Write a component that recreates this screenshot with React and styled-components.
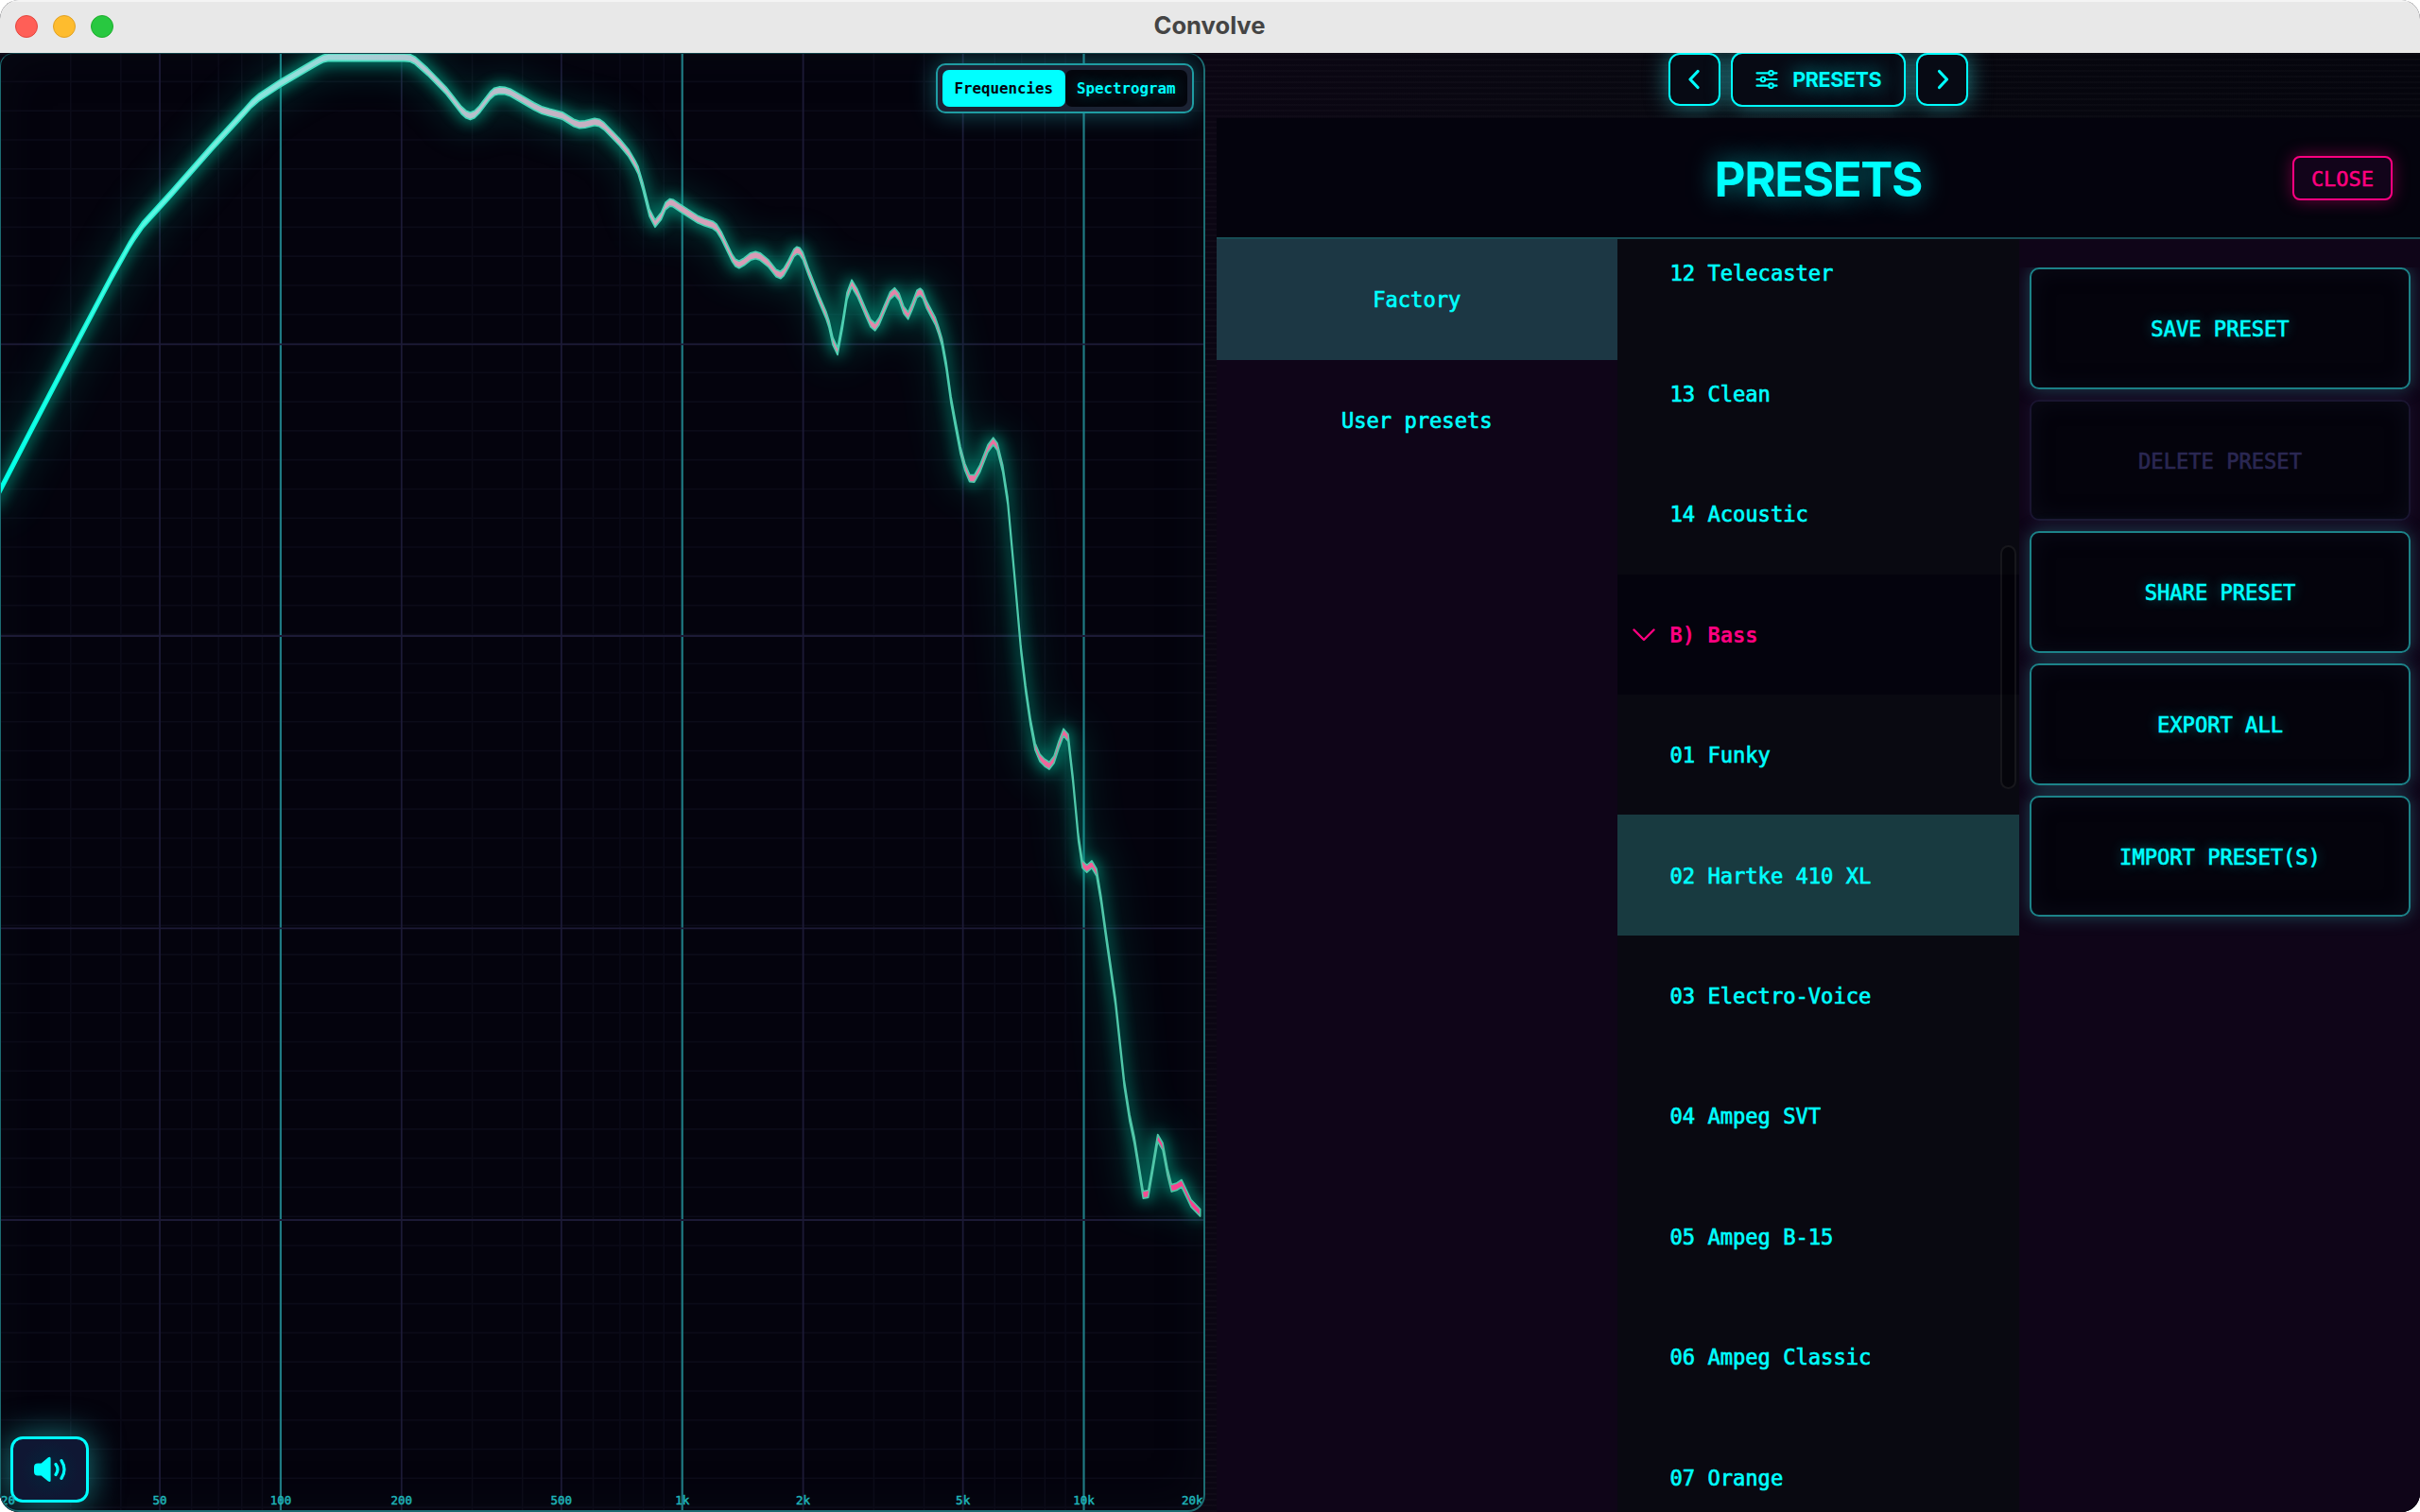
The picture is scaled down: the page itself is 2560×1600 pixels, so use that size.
import { useState } from "react";
import styled, { createGlobalStyle } from "styled-components";

const CYAN = "#00ffff";
const PINK = "#ff0080";
const DECADE = 424.8;
const MONO = "'DejaVu Sans Mono', monospace";

const factoryPresets = [
    { name: "12 Telecaster" },
    { name: "13 Clean" },
    { name: "14 Acoustic" },
    { name: "B) Bass", group: true },
    { name: "01 Funky" },
    { name: "02 Hartke 410 XL" },
    { name: "03 Electro-Voice" },
    { name: "04 Ampeg SVT" },
    { name: "05 Ampeg B-15" },
    { name: "06 Ampeg Classic" },
    { name: "07 Orange" },
];

const actions = [
    { label: "SAVE PRESET" },
    { label: "DELETE PRESET", disabled: true },
    { label: "SHARE PRESET" },
    { label: "EXPORT ALL" },
    { label: "IMPORT PRESET(S)" },
];

// frequency response, in panel pixels
const response = [
    [-6, 476], [0, 463], [33, 399], [82, 305], [118, 237], [137, 203], [142, 195], [151, 182], [181, 149],
    [225, 99], [258, 63], [266, 54], [274, 47], [296, 32.5], [324, 16], [337, 8.5], [342, 6], [348, 4.6],
    [428, 4.8], [434, 5.5], [439, 8], [452.5, 20], [472, 40], [488, 60.5], [493, 65], [497.5, 66.8],
    [502, 65], [507, 60], [518.5, 45], [523, 41], [528, 39.7], [534, 40], [540, 42], [565, 56.5],
    [573, 60.5], [581.5, 63], [595, 66.5], [607, 74], [613, 76], [619, 75.5], [629, 73], [634, 74],
    [639, 77.5], [655.5, 94.5], [665, 106], [672, 118], [675, 124], [680, 141], [687, 169], [693, 180.5],
    [699.5, 172.5], [704, 162], [708.7, 158.3], [712, 159], [718.6, 163.5], [738, 176], [745, 179],
    [754, 182], [758, 185], [763, 193], [774.7, 217.3], [778, 222], [781.8, 224], [787, 221], [794, 215.5],
    [799.3, 214], [804, 215.5], [812.5, 222.3], [821, 233], [825.7, 235], [829, 232], [833.7, 224],
    [840, 211.5], [843, 209], [846, 210], [849.3, 215], [855, 231], [866.8, 261], [873.8, 277.3],
    [877, 287], [881, 305], [886, 315.7], [891.3, 287.3], [896, 257.3], [901, 244], [907, 254],
    [916.3, 275.7], [921, 286], [925.7, 290], [930, 284], [935, 272], [941.5, 257], [946.5, 252.5],
    [951, 258], [956, 272], [960.7, 278], [965, 268], [970, 255], [973.4, 253], [976, 255.5],
    [980, 266], [989.5, 284], [993, 294], [996.5, 306], [1001, 331], [1006, 367], [1010, 389],
    [1016, 420.5], [1020.7, 438], [1025.7, 450], [1030.7, 450.4], [1036.7, 439.7], [1045, 418.6],
    [1050.7, 411], [1055, 416.7], [1060.7, 439.7], [1066, 474], [1073.3, 554.5], [1080, 631],
    [1085, 673], [1090, 707.6], [1095, 734], [1100, 745.8], [1105, 751], [1110, 754.3], [1115, 747.7],
    [1120, 732.4], [1125, 719], [1130, 724.8], [1135, 768.8], [1140.7, 830], [1145, 858.7],
    [1149.7, 863.3], [1155, 858.7], [1160, 867.3], [1165, 897.3], [1170, 934], [1180, 1004],
    [1189.3, 1090.7], [1195, 1127], [1200, 1150.7], [1204.3, 1177.3], [1209.3, 1208.3], [1214.7, 1207.3],
    [1219.3, 1180.7], [1224.7, 1148.3], [1230, 1157.3], [1235, 1184], [1239.3, 1201.3], [1244.7, 1199.7],
    [1250, 1196.3], [1260, 1217.3], [1269.7, 1227.3],
];

const freqX = (f) => DECADE * Math.log10(f / 20);

const ribbon = () => {
    const top = response.map(([x, y]) => `${x},${y - 3.8}`);
    const bottom = response.map(([x, y]) => `${x},${y + 3.8}`).reverse();
    return `M${top.join("L")}L${bottom.join("L")}Z`;
};

const frequencies = [10, 100, 1000, 10000]
    .flatMap((base) => [1, 2, 3, 4, 5, 6, 7, 8, 9].map((n) => n * base))
    .filter((f) => f > 20 && f < 20000);

const lineKind = (f) => {
    const digit = String(f)[0];
    if (digit === "1") return "major";
    return digit === "5" || f === 200 || f === 2000 ? "medium" : "minor";
};

const lineStyles = {
    minor: { stroke: "#0b0b18", strokeWidth: 1.6 },
    medium: { stroke: "#1c1a36", strokeWidth: 1.8 },
    major: { stroke: "#1f7a83", strokeWidth: 2.2 },
};

const axisLabels = [
    [50, "50"], [100, "100"], [200, "200"], [500, "500"], [1000, "1k"],
    [2000, "2k"], [5000, "5k"], [10000, "10k"],
];

function Graph() {
    return (
        <Plot viewBox="0 0 1274 1544">
            <defs>
                <linearGradient id="curve" gradientUnits="userSpaceOnUse" x1="0" y1="0" x2="1274" y2="0">
                    <stop offset="0" stopColor="#00ffee" />
                    <stop offset="0.1" stopColor="#4dfbe6" />
                    <stop offset="0.2" stopColor="#85e8dd" />
                    <stop offset="0.3" stopColor="#a6d0d6" />
                    <stop offset="0.45" stopColor="#c3b6c6" />
                    <stop offset="0.6" stopColor="#d6a0b8" />
                    <stop offset="0.75" stopColor="#e484a8" />
                    <stop offset="0.9" stopColor="#f25f98" />
                    <stop offset="1" stopColor="#fb3a8c" />
                </linearGradient>
                <linearGradient id="edge" gradientUnits="userSpaceOnUse" x1="0" y1="0" x2="1274" y2="0">
                    <stop offset="0" stopColor="#00ffe0" />
                    <stop offset="0.25" stopColor="#49e0c2" />
                    <stop offset="1" stopColor="#50c4a6" />
                </linearGradient>
            </defs>
            {Array.from({ length: 50 }, (_, i) => (
                <line key={i} x1="0" x2="1274" y1={30.4 + i * 30.79} y2={30.4 + i * 30.79} {...lineStyles.minor} />
            ))}
            {frequencies.map((f) => (
                <line key={f} x1={freqX(f)} x2={freqX(f)} y1="0" y2="1544" {...lineStyles[lineKind(f)]} />
            ))}
            {[308.3, 617, 926.3, 1235].map((y) => (
                <line key={y} x1="0" x2="1274" y1={y} y2={y} {...lineStyles.medium} />
            ))}
            <Glow d={ribbon()} $width={10} $blur={22} $alpha={0.4} />
            <Glow d={ribbon()} $width={4} $blur={8} $alpha={0.9} />
            <Curve d={ribbon()} />
            {axisLabels.map(([f, label]) => (
                <AxisText key={label} x={freqX(f)} y="1536" textAnchor="middle">{label}</AxisText>
            ))}
            <AxisText x="1272.5" y="1536" textAnchor="end">20k</AxisText>
        </Plot>
    );
}

function SpeakerIcon() {
    return (
        <svg width="36" height="28" viewBox="0 0 36 28">
            <path d="M5 7.5H8.6L16 1.3Q18.6 0 18.6 2.6V25.4Q18.6 28 16 26.6L8.6 20.5H5Q1 20.5 1 16.5V11.5Q1 7.5 5 7.5Z" fill={CYAN} />
            <path d="M24 8.5Q28 14 24 19.5M30 4.6Q36 14 30 23.4" fill="none" stroke={CYAN} strokeWidth="3.2" strokeLinecap="round" />
        </svg>
    );
}

function SlidersIcon() {
    return (
        <svg width="24" height="20" viewBox="0 0 24 20" fill="none" stroke={CYAN} strokeWidth="2.2" strokeLinecap="round">
            <path d="M1.5 3.3H13.5M19.5 3.3H22.5M1.5 10H5M11 10H22.5M1.5 16.7H13.5M19.5 16.7H22.5" />
            <circle cx="16.5" cy="3.3" r="2.3" />
            <circle cx="8" cy="10" r="2.3" />
            <circle cx="16.5" cy="16.7" r="2.3" />
        </svg>
    );
}

function ArrowIcon({ next }) {
    return (
        <svg width="14" height="22" viewBox="0 0 14 22" fill="none" stroke={CYAN} strokeWidth="3.2" strokeLinecap="round" strokeLinejoin="round">
            <path d={next ? "M3.5 2.5L11.5 11L3.5 19.5" : "M10 2.5L2 11L10 19.5"} />
        </svg>
    );
}

function FoldIcon() {
    return (
        <svg width="24" height="14" viewBox="0 0 24 14" fill="none" stroke={PINK} strokeWidth="2.4" strokeLinecap="round" strokeLinejoin="round">
            <path d="M1.5 1.5L12 12L22.5 1.5" />
        </svg>
    );
}

function App() {
    const [view, setView] = useState("Frequencies");
    const [bank, setBank] = useState("Factory");
    const [preset, setPreset] = useState("02 Hartke 410 XL");
    return (
        <Window>
            <GlobalStyle />
            <TitleBar>
                <Lights>
                    <Light $color="#ff5f57" $edge="#e2463f" />
                    <Light $color="#febc2e" $edge="#e0a023" />
                    <Light $color="#28c840" $edge="#1dad2c" />
                </Lights>
                <WindowTitle>Convolve</WindowTitle>
            </TitleBar>
            <Main>
                <GraphPanel>
                    <Graph />
                    <ViewSwitch>
                        {["Frequencies", "Spectrogram"].map((name) => (
                            <ViewTab key={name} $active={view === name} onClick={() => setView(name)}>{name}</ViewTab>
                        ))}
                    </ViewSwitch>
                    <VolumeButton><SpeakerIcon /></VolumeButton>
                    <FirstLabel>20</FirstLabel>
                </GraphPanel>
                <Side>
                    <Toolbar>
                        <StepButton><ArrowIcon /></StepButton>
                        <PresetsButton><SlidersIcon />PRESETS</PresetsButton>
                        <StepButton><ArrowIcon next /></StepButton>
                    </Toolbar>
                    <Browser>
                        <Header>
                            <Heading>PRESETS</Heading>
                            <CloseButton>CLOSE</CloseButton>
                        </Header>
                        <Columns>
                            <Banks>
                                {["Factory", "User presets"].map((name) => (
                                    <Bank key={name} $active={bank === name} onClick={() => setBank(name)}>{name}</Bank>
                                ))}
                            </Banks>
                            <PresetList>
                                <Rows>
                                    {factoryPresets.map(({ name, group }) => (
                                        <Row key={name} $group={group} $active={preset === name} onClick={() => setPreset(name)}>
                                            <Fold>{group && <FoldIcon />}</Fold>
                                            {name}
                                        </Row>
                                    ))}
                                </Rows>
                                <Thumb />
                            </PresetList>
                            <Actions>
                                {actions.map(({ label, disabled }) => (
                                    <Action key={label} disabled={disabled}>{label}</Action>
                                ))}
                            </Actions>
                        </Columns>
                    </Browser>
                </Side>
            </Main>
        </Window>
    );
}

const GlobalStyle = createGlobalStyle`
    * {
        box-sizing: border-box;
    }
    body {
        margin: 0;
        background: #ffffff;
        overflow: hidden;
    }
    button {
        margin: 0;
        padding: 0;
        border: none;
        font-family: ${MONO};
        cursor: pointer;
    }
`
const Window = styled.div`
    width: 2560px;
    height: 1600px;
    display: flex;
    flex-direction: column;
    border-radius: 20px;
    overflow: hidden;
    background: #08070f;
    font-family: ${MONO};
    color: ${CYAN};
`
const TitleBar = styled.div`
    height: 56px;
    flex-shrink: 0;
    display: grid;
    grid-template-columns: 1fr auto 1fr;
    align-items: center;
    padding: 0 17px 2px 16px;
    background: #e8e8e8;
    border-top: 2px solid #f4f4f4;
`
const Lights = styled.div`
    display: flex;
    gap: 16px;
`
const Light = styled.div`
    width: 24px;
    height: 24px;
    border-radius: 50%;
    background: ${props => props.$color};
    border: 1px solid ${props => props.$edge};
`
const WindowTitle = styled.div`
    padding-bottom: 3px;
    font-family: Inter, sans-serif;
    font-size: 25.6px;
    font-weight: 700;
    color: #444444;
`
const Main = styled.div`
    flex: 1;
    min-height: 0;
    display: flex;
    background:
        repeating-linear-gradient(rgba(255, 255, 255, 0.018) 0 2px, transparent 2px 6px),
        linear-gradient(90deg, #0b0613 50%, #080810 70%, #05050d 100%);
`
const GraphPanel = styled.div`
    position: relative;
    width: 1275px;
    flex-shrink: 0;
    border: 2px solid #1c6c72;
    border-left-width: 1px;
    border-top: 1px solid #11434a;
    border-radius: 14px 18px 18px 20px;
    background: #04030d;
    box-shadow: inset 0 0 50px rgba(20, 30, 40, 0.25);
    overflow: hidden;
`
const Plot = styled.svg`
    display: block;
    width: 1274px;
    height: 1544px;
    margin: -1px 0 0 -1px;
`
const Curve = styled.path`
    fill: url(#curve);
    stroke: url(#edge);
    stroke-width: 1.6;
    stroke-linejoin: round;
`
const Glow = styled.path`
    fill: #00b494;
    stroke: #00b494;
    stroke-width: ${props => props.$width};
    stroke-linejoin: round;
    opacity: ${props => props.$alpha};
    filter: blur(${props => props.$blur}px);
`
const AxisText = styled.text`
    font-family: ${MONO};
    font-size: 12.5px;
    fill: #1fb4b8;
    stroke: #1fb4b8;
    stroke-width: 0.5;
`
const FirstLabel = styled.div`
    position: absolute;
    left: 0;
    bottom: 3px;
    font-size: 12.5px;
    line-height: 15px;
    color: #1fb4b8;
    -webkit-text-stroke: 0.5px #1fb4b8;
`
const ViewSwitch = styled.div`
    position: absolute;
    top: 10px;
    right: 10px;
    width: 273px;
    height: 53px;
    display: flex;
    padding: 5px;
    border: 2px solid #1f9ca2;
    border-radius: 10px;
    background: #1b2233;
    box-shadow: 0 0 26px rgba(40, 190, 200, 0.45);
`
const ViewTab = styled.button`
    flex: 1;
    border-radius: 7px;
    background: ${props => props.$active ? CYAN : "#04060d"};
    color: ${props => props.$active ? "#04040f" : CYAN};
    font-size: 15.8px;
    font-weight: 700;
    text-shadow: ${props => props.$active ? "none" : "0 0 16px rgba(0, 255, 255, 0.4)"};
`
const VolumeButton = styled.button`
    position: absolute;
    left: 10px;
    bottom: 8px;
    width: 83px;
    height: 70px;
    display: flex;
    align-items: center;
    justify-content: center;
    border: 3px solid ${CYAN};
    border-radius: 13px;
    background: radial-gradient(circle, #04243a, #0f1733 60%);
    box-shadow: 0 0 36px rgba(40, 210, 210, 0.6);
`
const Side = styled.div`
    flex: 1;
    min-width: 0;
    display: flex;
    flex-direction: column;
    padding-left: 11.5px;
`
const Toolbar = styled.div`
    height: 69px;
    flex-shrink: 0;
    display: flex;
    justify-content: center;
    align-items: center;
    gap: 11px;
    padding: 0 0 13px 1px;
    overflow: hidden;
`
const StepButton = styled.button`
    width: 55px;
    height: 56px;
    display: flex;
    align-items: center;
    justify-content: center;
    border: 2px solid ${CYAN};
    border-radius: 12px;
    background: #070a14;
    box-shadow: 0 0 24px rgba(50, 200, 205, 0.6);
`
const PresetsButton = styled(StepButton)`
    width: 185px;
    height: 58px;
    flex-shrink: 0;
    gap: 15px;
    font-family: Inter, sans-serif;
    font-size: 21.5px;
    font-weight: 700;
    letter-spacing: -0.4px;
    color: ${CYAN};
    text-shadow: 0 0 20px rgba(0, 255, 255, 0.6);
`
const Browser = styled.div`
    flex: 1;
    min-height: 0;
    display: flex;
    flex-direction: column;
`
const Header = styled.div`
    height: 128px;
    flex-shrink: 0;
    display: grid;
    grid-template-columns: 1fr auto 1fr;
    align-items: center;
    padding: 0 29px;
    background: #04030d;
    border-bottom: 2px solid #174c54;
`
const Heading = styled.div`
    grid-column: 2;
    padding-top: 2px;
    font-family: Inter, sans-serif;
    font-size: 51px;
    font-weight: 700;
    letter-spacing: -1.4px;
    text-shadow: 0 0 28px rgba(0, 255, 255, 0.55);
`
const CloseButton = styled.button`
    justify-self: end;
    width: 106px;
    height: 47px;
    padding-top: 2px;
    border: 2px solid ${PINK};
    border-radius: 8px;
    background: #12041a;
    color: ${PINK};
    font-size: 22px;
    -webkit-text-stroke: 0.5px ${PINK};
    box-shadow: 0 0 18px rgba(255, 0, 128, 0.4);
`
const Columns = styled.div`
    flex: 1;
    min-height: 0;
    display: grid;
    grid-template-columns: repeat(3, 1fr);
    background: #0f0518;
`
const Banks = styled.div`
    display: flex;
    flex-direction: column;
`
const Bank = styled.button`
    height: 127.6px;
    padding-top: 1px;
    background: ${props => props.$active ? "#1c3744" : "transparent"};
    color: ${CYAN};
    font-size: 22.1px;
    -webkit-text-stroke: 0.65px ${CYAN};
`
const PresetList = styled.div`
    position: relative;
    min-height: 0;
    overflow: hidden;
    background: #090911;
`
const Rows = styled.div`
    margin-top: -27.8px;
`
const Row = styled.div`
    height: 127.45px;
    display: flex;
    align-items: center;
    padding-top: 1px;
    font-size: 22.1px;
    font-weight: ${props => props.$group ? 700 : 400};
    color: ${props => props.$group ? PINK : CYAN};
    -webkit-text-stroke: ${props => props.$group ? "0" : `0.65px ${CYAN}`};
    background: ${props => props.$group ? "#04030d" : props.$active ? "#183a40" : "transparent"};
`
const Fold = styled.span`
    width: 55.5px;
    display: flex;
    padding-left: 16px;
`
const Thumb = styled.div`
    position: absolute;
    top: 324px;
    right: 3px;
    width: 17px;
    height: 258px;
    border: 2px solid rgba(255, 255, 255, 0.07);
    border-radius: 9px;
    background: rgba(0, 0, 0, 0.35);
`
const Actions = styled.div`
    display: flex;
    flex-direction: column;
    gap: 11px;
    margin-top: 30px;
    padding: 0 10px 0 11.5px;
    overflow: hidden;
`
const Action = styled.button`
    height: 128.7px;
    flex-shrink: 0;
    padding-top: 1px;
    border: 2px solid ${props => props.disabled ? "#1a1530" : "#1c8288"};
    border-radius: 10px;
    background: #04030c;
    color: ${props => props.disabled ? "#2a2752" : CYAN};
    font-size: 22.1px;
    -webkit-text-stroke: 0.65px ${props => props.disabled ? "#2a2752" : CYAN};
    text-shadow: ${props => props.disabled ? "none" : "0 0 14px rgba(0, 255, 255, 0.45)"};
    box-shadow: ${props => props.disabled ? "0 0 16px rgba(40, 30, 70, 0.4)" : "0 0 18px rgba(60, 180, 190, 0.36)"}, inset 0 0 24px rgba(30, 40, 60, 0.25);
`

export default App;
